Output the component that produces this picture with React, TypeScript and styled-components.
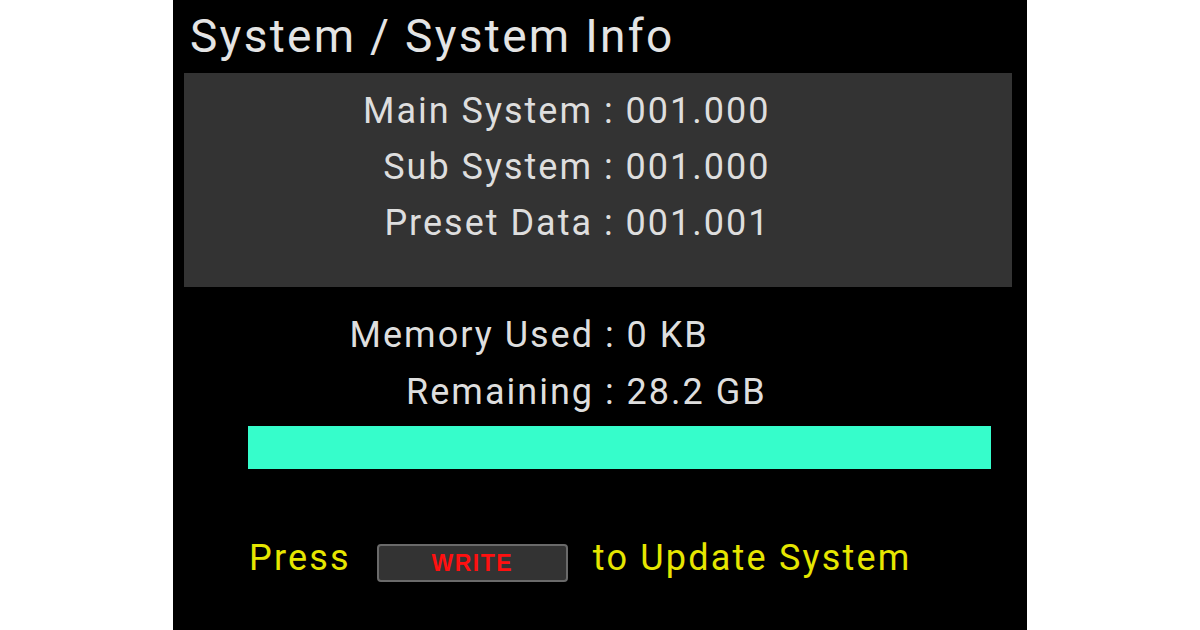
import styled, { createGlobalStyle } from 'styled-components'

const GlobalStyle = createGlobalStyle`
  html, body {
    margin: 0;
    padding: 0;
    background: #ffffff;
  }
`

const StyledScreen = styled.div`
  width: 854px;
  height: 630px;
  margin: 0 auto;
  background: #000000;
  font-family: Roboto, "Noto Sans", sans-serif;
  color: #dedede;
  box-sizing: border-box;
  display: flex;
  flex-direction: column;
  overflow: hidden;
`

const StyledTitle = styled.h1`
  margin: 0;
  padding: 9px 0 0 17px;
  font-size: 46px;
  font-weight: 400;
  line-height: 54px;
  letter-spacing: 2.3px;
  color: #e4e4e4;
`

const StyledVersionBox = styled.div`
  margin: 10px 15px 0 11px;
  padding: 10px 0 36px;
  background: #333333;
`

const StyledInfoRow = styled.div<{ $labelWidth: number; $lineHeight: number }>`
  display: grid;
  grid-template-columns: ${(p) => p.$labelWidth}px auto;
  font-size: 36px;
  line-height: ${(p) => p.$lineHeight}px;
  letter-spacing: 2px;
  white-space: pre;
`

const StyledLabel = styled.span`
  text-align: right;
`

const StyledMemory = styled.div`
  margin-top: 20px;
`

const StyledBar = styled.div`
  margin: 5px 36px 0 75px;
  height: 43px;
  background: #36fdcb;
`

const StyledPrompt = styled.div`
  margin-top: 61px;
  padding-left: 76px;
  display: flex;
  align-items: center;
  font-size: 36px;
  line-height: 56px;
  letter-spacing: 2.2px;
  color: #e6e600;
  white-space: pre;
`

const StyledWriteKey = styled.span`
  width: 191px;
  height: 38px;
  margin: 9px 25px 0 26px;
  box-sizing: border-box;
  border: 2px solid #6a6a6a;
  border-radius: 4px;
  background: #333333;
  display: flex;
  align-items: center;
  justify-content: center;
  font-family: "Liberation Sans", Arial, sans-serif;
  font-weight: 700;
  font-size: 23px;
  letter-spacing: 1.5px;
  color: #ff1010;
`

interface InfoLine {
  label: string
  value: string
}

const versions: InfoLine[] = [
  { label: 'Main System', value: '001.000' },
  { label: 'Sub System', value: '001.000' },
  { label: 'Preset Data', value: '001.001' },
]

const memory: InfoLine[] = [
  { label: 'Memory Used', value: '0 KB' },
  { label: 'Remaining', value: '28.2 GB' },
]

const App: React.FC = () => {
  return (
    <>
      <GlobalStyle />
      <StyledScreen>
        <StyledTitle>System / System Info</StyledTitle>

        <StyledVersionBox>
          {versions.map((line) => (
            <StyledInfoRow key={line.label} $labelWidth={409} $lineHeight={56}>
              <StyledLabel>{line.label}</StyledLabel>
              <span>{` : ${line.value}`}</span>
            </StyledInfoRow>
          ))}
        </StyledVersionBox>

        <StyledMemory>
          {memory.map((line) => (
            <StyledInfoRow key={line.label} $labelWidth={421} $lineHeight={57}>
              <StyledLabel>{line.label}</StyledLabel>
              <span>{` : ${line.value}`}</span>
            </StyledInfoRow>
          ))}
        </StyledMemory>

        <StyledBar />

        <StyledPrompt>
          <span>Press</span>
          <StyledWriteKey>WRITE</StyledWriteKey>
          <span>to Update System</span>
        </StyledPrompt>
      </StyledScreen>
    </>
  )
}

export default App
